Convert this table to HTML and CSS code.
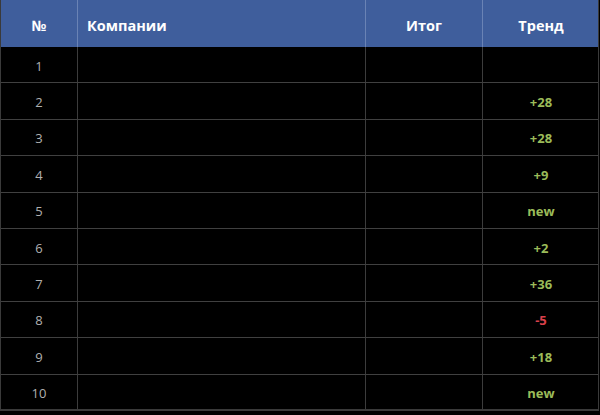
FILE: index.html
```html
<!DOCTYPE html>
<html lang="ru">
<head>
<meta charset="utf-8">
<link rel="stylesheet" href="styles.css">
</head>
<body>
<div class="table">
  <div class="row head">
    <div class="cell c-num">№</div>
    <div class="cell c-name">Компании</div>
    <div class="cell c-total">Итог</div>
    <div class="cell c-trend">Тренд</div>
  </div>
  <div class="row"><div class="cell c-num">1</div><div class="cell"></div><div class="cell"></div><div class="cell c-trend"></div></div>
  <div class="row"><div class="cell c-num">2</div><div class="cell"></div><div class="cell"></div><div class="cell c-trend up">+28</div></div>
  <div class="row"><div class="cell c-num">3</div><div class="cell"></div><div class="cell"></div><div class="cell c-trend up">+28</div></div>
  <div class="row"><div class="cell c-num">4</div><div class="cell"></div><div class="cell"></div><div class="cell c-trend up">+9</div></div>
  <div class="row"><div class="cell c-num">5</div><div class="cell"></div><div class="cell"></div><div class="cell c-trend up">new</div></div>
  <div class="row"><div class="cell c-num">6</div><div class="cell"></div><div class="cell"></div><div class="cell c-trend up">+2</div></div>
  <div class="row"><div class="cell c-num">7</div><div class="cell"></div><div class="cell"></div><div class="cell c-trend up">+36</div></div>
  <div class="row"><div class="cell c-num">8</div><div class="cell"></div><div class="cell"></div><div class="cell c-trend down">-5</div></div>
  <div class="row"><div class="cell c-num">9</div><div class="cell"></div><div class="cell"></div><div class="cell c-trend up">+18</div></div>
  <div class="row"><div class="cell c-num">10</div><div class="cell"></div><div class="cell"></div><div class="cell c-trend up">new</div></div>
</div>
</body>
</html>
```
FILE: styles.css
```css
html, body {
  margin: 0;
  padding: 0;
  background: #000;
  width: 600px;
  height: 415px;
  overflow: hidden;
  font-family: "Open Sans", "Noto Sans", sans-serif;
}
.table {
  width: 599px;
  border-left: 1px solid #3a3a3a;
  border-right: 1px solid #3a3a3a;
  box-sizing: border-box;
}
.row {
  display: grid;
  grid-template-columns: 77px 288px 117px 116px;
  height: 36.4px;
  box-sizing: border-box;
  border-bottom: 1px solid #404040;
}
.row:last-child {
  border-bottom: 2px solid #3a3a3a;
}
.cell {
  display: flex;
  align-items: center;
  justify-content: center;
  border-right: 1px solid #3c3c3c;
  font-size: 13px;
  color: #b0b0b0;
}
.cell:last-child {
  border-right: none;
}
.head {
  height: 47px;
  background: #3f5e9c;
  border-bottom: none;
}
.head .cell {
  color: #fff;
  font-weight: 700;
  font-size: 14.5px;
  border-right-color: #6a83b5;
  padding-top: 3px;
}
.head .c-name {
  justify-content: flex-start;
  padding-left: 9px;
}
.c-num {
  padding-top: 2px;
}
.c-trend {
  font-weight: 700;
  padding-top: 2px;
}
.up { color: #9bbb59; }
.down { color: #d9404b; }
```
